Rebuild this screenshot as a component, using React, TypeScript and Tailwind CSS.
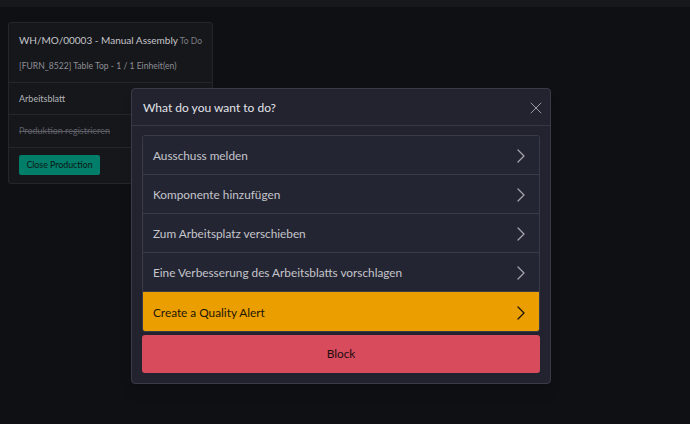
import { ChevronRight, X } from "lucide-react"

const actions = [
  "Ausschuss melden",
  "Komponente hinzufügen",
  "Zum Arbeitsplatz verschieben",
  "Eine Verbesserung des Arbeitsblatts vorschlagen",
]

export default function App() {
  return (
    <div
      className="relative w-[690px] h-[424px] overflow-hidden bg-[#0f1014]"
      style={{ fontFamily: 'Lato, "Noto Sans", sans-serif' }}
    >
      <div className="h-[7px] bg-[#17181c]" />

      {/* work order card */}
      <div className="ml-[8px] mt-[15px] w-[205px] rounded-[3px] border border-[#25262c] bg-[#16171b]">
        <div className="h-[60px] px-[10px] pt-[10px] border-b border-[#25262c]">
          <div className="flex items-baseline justify-between whitespace-nowrap leading-[14px]">
            <span className="text-[10px] text-[#c4c5ca]">WH/MO/00003 - Manual Assembly</span>
            <span className="text-[8.5px] text-[#7c7d84]">To Do</span>
          </div>
          <div className="mt-[12px] leading-[12px] text-[8.6px] text-[#8e8f96] whitespace-nowrap">
            [FURN_8522] Table Top - 1 / 1 Einheit(en)
          </div>
        </div>
        <div className="h-[32px] px-[10px] flex items-center border-b border-[#25262c] text-[9px] text-[#b4b5ba]">
          Arbeitsblatt
        </div>
        <div className="h-[33px] px-[10px] flex items-center border-b border-[#25262c] text-[9px] text-[#5e5f66] line-through">
          Produktion registrieren
        </div>
        <div className="h-[35px] px-[10px] pt-[7px] flex items-start">
          <button className="h-[20px] w-[81px] rounded-[2px] bg-[#007e6a] text-[8.8px] leading-none text-[#0b1512]">
            Close Production
          </button>
        </div>
      </div>

      {/* dialog */}
      <div className="absolute left-[131px] top-[88px] w-[420px] rounded-[4px] border border-[#393b49] bg-[#22232f] shadow-lg">
        <div className="h-[37px] pl-[11px] pr-[4px] pt-[2px] flex items-center justify-between border-b border-[#353745]">
          <span className="text-[12px] text-[#e1e2e7]">What do you want to do?</span>
          <X className="w-[20px] h-[20px] text-[#9a9ba3]" strokeWidth={1.2} />
        </div>
        <div className="px-[10px] pt-[9px] pb-[10px]">
          <div className="rounded-[3px] border border-[#393b49] overflow-hidden">
            {actions.map((label) => (
              <div
                key={label}
                className="h-[39px] pl-[10px] pr-[6px] pt-[2px] flex items-center justify-between border-b border-[#393b49] bg-[#242532]"
              >
                <span className="text-[11.8px] text-[#c5c6cc]">{label}</span>
                <ChevronRight className="w-[24px] h-[24px] text-[#a2a3ab]" strokeWidth={1.3} />
              </div>
            ))}
            <div className="h-[39px] pl-[10px] pr-[6px] pt-[2px] flex items-center justify-between bg-[#eb9e00]">
              <span className="text-[11.8px] text-[#1b1608]">Create a Quality Alert</span>
              <ChevronRight className="w-[24px] h-[24px] text-[#1b1608]" strokeWidth={1.3} />
            </div>
          </div>
          <button className="mt-[3px] w-full h-[38px] rounded-[3px] bg-[#d74b5c] text-[11.8px] text-[#1c0d10]">
            Block
          </button>
        </div>
      </div>
    </div>
  )
}
